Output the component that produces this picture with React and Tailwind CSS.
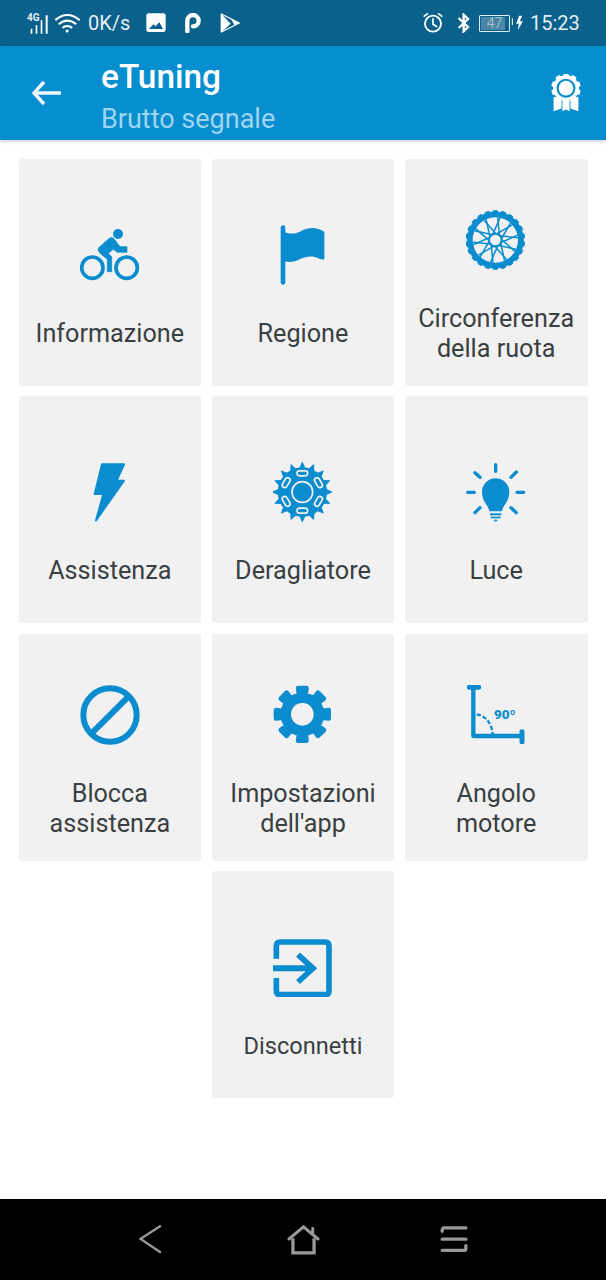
const polar = (cx, cy, r, deg) => {
  const a = (deg * Math.PI) / 180;
  return [(cx + r * Math.cos(a)).toFixed(1), (cy + r * Math.sin(a)).toFixed(1)];
};

// closed outline going between radii, one step per entry
const ring = (cx, cy, steps) =>
  "M" + steps.map(([r, d]) => polar(cx, cy, r, d).join(" ")).join("L") + "Z";

const teeth = (n, rIn, rOut, cx = 120, cy = 120, wIn = 0.5, wOut = 0.16) => {
  const s = [];
  const step = 360 / n;
  for (let i = 0; i < n; i++) {
    const c = i * step - 90;
    s.push([rIn, c - (step * wIn) / 2 - 0.1], [rOut, c - (step * wOut) / 2], [rOut, c + (step * wOut) / 2], [rIn, c + (step * wIn) / 2]);
  }
  return ring(cx, cy, s);
};

// zoom-crop units, 3 per screen pixel
const Ico = ({ box = "30 30 180 180", w = 60, h = 60, children, className = "" }) => (
  <svg viewBox={box} width={w} height={h} className={"block shrink-0 " + className}>{children}</svg>
);

const BLUE = "#0b8ccf";
const CARD = "#f1f1f1";

const Bike = () => (
  <Ico box="60 75 180 180">
    <circle cx="97" cy="203" r="32" fill="none" stroke={BLUE} strokeWidth="11" />
    <circle cx="200" cy="203" r="32" fill="none" stroke={BLUE} strokeWidth="11" />
    <circle cx="174" cy="102" r="15" fill={BLUE} />
    <path d="M116 143L150 113Q159 111 165 120L180 140H201V157H172L160 148L145 160L155 170V215H142V178L120 160Q111 151 116 143Z" fill={BLUE} stroke={BLUE} strokeWidth="2" strokeLinejoin="round" />
  </Ico>
);

const Flag = () => (
  <Ico box="39 45 180 180">
    <path d="M69 53V217" stroke={BLUE} strokeWidth="14" strokeLinecap="round" />
    <path d="M70 65C95 75 110 70 125 62C150 50 170 52 193 65V148Q185 150 175 145C155 135 135 140 115 150C100 157 85 157 70 153Z" fill={BLUE} />
  </Ico>
);

const spokes = [];
for (let i = 0; i < 20; i++) {
  const d = i * 18;
  const [x1, y1] = polar(118, 120, 16, d);
  const [x2, y2] = polar(118, 120, 68, d + (i % 2 ? 48 : -48));
  spokes.push(<line key={i} x1={x1} y1={y1} x2={x2} y2={y2} stroke={BLUE} strokeWidth="4.5" />);
}

const Wheel = () => (
  <Ico>
    <path d={teeth(22, 84, 88, 118, 120, 0.6, 0.45)} fill={BLUE} stroke={BLUE} strokeWidth="3" strokeLinejoin="round" />
    <circle cx="118" cy="120" r="68" fill={CARD} />
    {spokes}
    <circle cx="118" cy="120" r="19" fill={CARD} stroke={BLUE} strokeWidth="6" />
  </Ico>
);

const Bolt = () => (
  <Ico>
    <path d="M96 37H162L140 86H162L78 205L100 126H74Z" fill={BLUE} stroke={BLUE} strokeWidth="6" strokeLinejoin="round" />
  </Ico>
);

const Sprocket = () => (
  <Ico>
    <path d={teeth(16, 72, 90, 118, 120, 0.66, 0.06)} fill={BLUE} />
    <circle cx="118" cy="120" r="74" fill={BLUE} />
    <circle cx="118" cy="120" r="31" fill={BLUE} stroke={CARD} strokeWidth="5" />
    {[-90, -30, 30, 90, 150, 210].map((d) => {
      const [x, y] = polar(118, 120, 56, d);
      return (
        <rect key={d} x={Number(x) - 16} y={Number(y) - 7.5} width="32" height="15" rx="7.5" fill={BLUE} stroke={CARD} strokeWidth="5" transform={`rotate(${d + 90} ${x} ${y})`} />
      );
    })}
  </Ico>
);

const Bulb = () => (
  <Ico>
    <g stroke={BLUE} strokeWidth="10" strokeLinecap="round">
      <path d="M119 38V58M57 62L72 76M181 60L165 76M35 121H55M183 121H203M57 182L72 167M165 167L181 182" />
    </g>
    <path d="M100 178C98 160 78 150 78 120A41 41 0 0 1 160 120C160 150 140 160 138 178Z" fill={BLUE} />
    <rect x="102" y="184" width="34" height="6" fill={BLUE} />
    <rect x="104" y="194" width="30" height="5" fill={BLUE} />
    <path d="M111 203H127L119 209Z" fill={BLUE} />
  </Ico>
);

const Blocked = () => (
  <Ico>
    <circle cx="120" cy="120" r="80" fill="none" stroke={BLUE} strokeWidth="18" />
    <path d="M64 176L176 64" stroke={BLUE} strokeWidth="18" />
  </Ico>
);

const Gear = () => (
  <Ico>
    <path d={teeth(8, 60, 80, 118, 118, 0.42, 0.4)} fill={BLUE} stroke={BLUE} strokeWidth="14" strokeLinejoin="round" />
    <circle cx="118" cy="118" r="62" fill={BLUE} />
    <circle cx="118" cy="118" r="34" fill={CARD} />
  </Ico>
);

const Angle = () => (
  <Ico>
    <path d="M40 37H68M198 170V200" stroke={BLUE} strokeWidth="15" strokeLinecap="round" fill="none" />
    <path d="M52 37V183H198" stroke={BLUE} strokeWidth="13" fill="none" strokeLinejoin="round" />
    <path d="M62 118C88 122 108 145 110 178" stroke={BLUE} strokeWidth="7" strokeDasharray="13 6" fill="none" />
    <text x="114" y="132" fill={BLUE} fontSize="40" fontWeight="900" fontFamily="Roboto, sans-serif">90º</text>
  </Ico>
);

const Exit = () => (
  <Ico box="30 27 180 180">
    <path d="M40 92V54Q40 42 52 42H186Q198 42 198 54V188Q198 200 186 200H52Q40 200 40 188V150" fill="none" stroke={BLUE} strokeWidth="17" />
    <path d="M30 121H150" stroke={BLUE} strokeWidth="18" />
    <path d="M105 80L150 121L105 162" fill="none" stroke={BLUE} strokeWidth="17" />
  </Ico>
);

const ITEMS = [
  { icon: <Bike />, label: ["Informazione"] },
  { icon: <Flag />, label: ["Regione"] },
  { icon: <Wheel />, label: ["Circonferenza", "della ruota"] },
  { icon: <Bolt />, label: ["Assistenza"] },
  { icon: <Sprocket />, label: ["Deragliatore"] },
  { icon: <Bulb />, label: ["Luce"] },
  { icon: <Blocked />, label: ["Blocca", "assistenza"] },
  { icon: <Gear />, label: ["Impostazioni", "dell'app"] },
  { icon: <Angle />, label: ["Angolo", "motore"] },
  { icon: <Exit />, label: ["Disconnetti"], col: "col-start-2", size: "text-[23.6px]" },
];

const Card = ({ icon, label, col = "", size = "text-[25.2px]" }) => (
  <div className={"h-[227px] rounded-[3px] bg-[#f1f1f1] flex flex-col items-center justify-center pt-[29px] " + col}>
    {icon}
    <div className={"mt-[34px] text-center leading-[30px] text-[#3a3f42] " + size}>
      {label.map((l) => <div key={l}>{l}</div>)}
    </div>
  </div>
);

const StatusBar = () => (
  <div className="h-[46px] shrink-0 bg-[#09618c] flex items-center text-[#e6eef3] pl-[27px]">
    <div className="relative w-[21px] h-[24px]">
      <span className="absolute left-0 top-[1px] text-[10px] leading-[11px] font-bold">4G</span>
      <svg viewBox="81 36 63 60" width="21" height="20" className="absolute top-[3px] left-0">
        <path d="M92 80h5v15h-5zM107 70h5v25h-5zM122 55h5v40h-5zM137 40h6v55h-6z" fill="#fff" />
      </svg>
    </div>
    <svg viewBox="162 40 80 56" width="27" height="19" className="ml-[6px]">
      <path d="M166 58Q201 28 238 58M176 70Q201 49 228 70M187 81Q201 70 216 81" fill="none" stroke="#fff" strokeWidth="6" />
      <circle cx="201" cy="90" r="4.5" fill="#fff" />
    </svg>
    <span className="ml-[7px] w-[42px] text-[20px] leading-none">0K/s</span>
    <svg viewBox="438 40 60 60" width="20" height="20" className="ml-[16px]">
      <path fillRule="evenodd" d="M446 41H490Q497 41 497 48V90Q497 97 490 97H446Q439 97 439 90V48Q439 41 446 41ZM447 88H489L478 68L467 80L460 74Z" fill="#fff" />
    </svg>
    <svg viewBox="552 42 54 60" width="18" height="20" className="ml-[18px]">
      <path d="M562 97V65A17 17 0 1 1 579 82" fill="none" stroke="#fff" strokeWidth="13" strokeLinecap="round" />
    </svg>
    <svg viewBox="660 40 60 60" width="20" height="20" className="ml-[18px]">
      <path d="M664 43L718 70L664 97Z" fill="none" stroke="#fff" strokeWidth="4" strokeLinejoin="round" />
      <path d="M664 43L692 72L664 97V43ZM693 58L718 70L703 76Z" fill="#fff" />
    </svg>

    <svg viewBox="660 36 66 66" width="22" height="22" className="ml-[182px]">
      <circle cx="693" cy="71" r="24" fill="none" stroke="#fff" strokeWidth="5.5" />
      <path d="M693 55V73L706 81M665 50L678 40M721 50L708 40" fill="none" stroke="#fff" strokeWidth="5" />
    </svg>
    <svg viewBox="765 40 42 60" width="14" height="20" className="ml-[13px]">
      <path d="M770 55L798 82L785 95V45L798 58L770 85" fill="none" stroke="#fff" strokeWidth="7" />
    </svg>
    <div className="relative ml-[8px] w-[31px] h-[17px] rounded-[1px] border border-[#dfe9ef] text-center">
      <div className="absolute left-[1px] top-[1px] bottom-[1px] w-[24px] bg-[#4d87a7]" />
      <span className="relative block text-[14px] leading-[15px] font-light text-[#b9ccd7]">47</span>
    </div>
    <svg viewBox="928 44 38 48" width="13" height="16" className="ml-[1px]">
      <path d="M930 54h3v20h-3zM952 46L943 70H951L948 90L963 63H954L961 46Z" fill="#fff" />
    </svg>
    <span className="ml-[6px] text-[20px] leading-none">15:23</span>
  </div>
);

const Header = () => (
  <div className="relative z-10 h-[94px] shrink-0 bg-[#078ecf] shadow-[0_2px_3px_rgba(0,0,0,0.16)] flex items-center">
    <svg viewBox="0 0 30 26" width="30" height="26" className="ml-[32px] shrink-0">
      <path d="M12 2L2 13L12 24M3 13H29" fill="none" stroke="#eef7fc" strokeWidth="3.4" />
    </svg>
    <div className="ml-[39px] flex-1 pt-[6px]">
      <div className="text-[33.4px] leading-[40px] font-medium text-white">eTuning</div>
      <div className="text-[27px] leading-[32px] mt-[6px] text-[#9fd5ef]">Brutto segnale</div>
    </div>
    <svg viewBox="0 0 36 44" width="32" height="39" className="mr-[24px] shrink-0">
      <path d="M4 26H13V39L4 42ZM32 26H23V39L32 42ZM14 30H22V42L18 40L14 42Z" fill="#fff" />
      <path d={teeth(10, 14, 16, 18, 16, 0.6, 0.4)} fill="#fff" stroke="#fff" strokeWidth="1.5" strokeLinejoin="round" />
      <circle cx="18" cy="16" r="9.5" fill="#fff" stroke="#078ecf" strokeWidth="2.4" />
    </svg>
  </div>
);

const NavBar = () => (
  <div className="h-[81px] shrink-0 bg-black flex items-center justify-between pl-[139px] pr-[138px]">
    <svg viewBox="60 92 68 88" width="23" height="29">
      <path d="M123 96L64 134L123 174" fill="none" stroke="#999" strokeWidth="7" strokeLinecap="round" />
    </svg>
    <svg viewBox="500 90 100 90" width="33" height="30" className="ml-[4px]">
      <path d="M506 132L550 95L594 132M578 100V118" fill="none" stroke="#999" strokeWidth="9" strokeLinecap="round" />
      <path d="M518 130V174H582V130" fill="none" stroke="#999" strokeWidth="10" />
    </svg>
    <svg viewBox="960 94 84 82" width="28" height="27">
      <path d="M1038 100H972Q966 100 966 110M966 134H1038M1038 154V162Q1038 168 1032 168H966" fill="none" stroke="#999" strokeWidth="10" strokeLinecap="round" />
    </svg>
  </div>
);

export default function App() {
  return (
    <div className="w-[606px] h-[1280px] flex flex-col bg-white font-['Roboto',sans-serif]">
      <StatusBar />
      <Header />
      <main className="flex-1 px-[18.5px] pt-[19px]">
        <div className="grid grid-cols-3 gap-x-[10.5px] gap-y-[10.33px]">
          {ITEMS.map((it, i) => <Card key={i} {...it} />)}
        </div>
      </main>
      <NavBar />
    </div>
  );
}
